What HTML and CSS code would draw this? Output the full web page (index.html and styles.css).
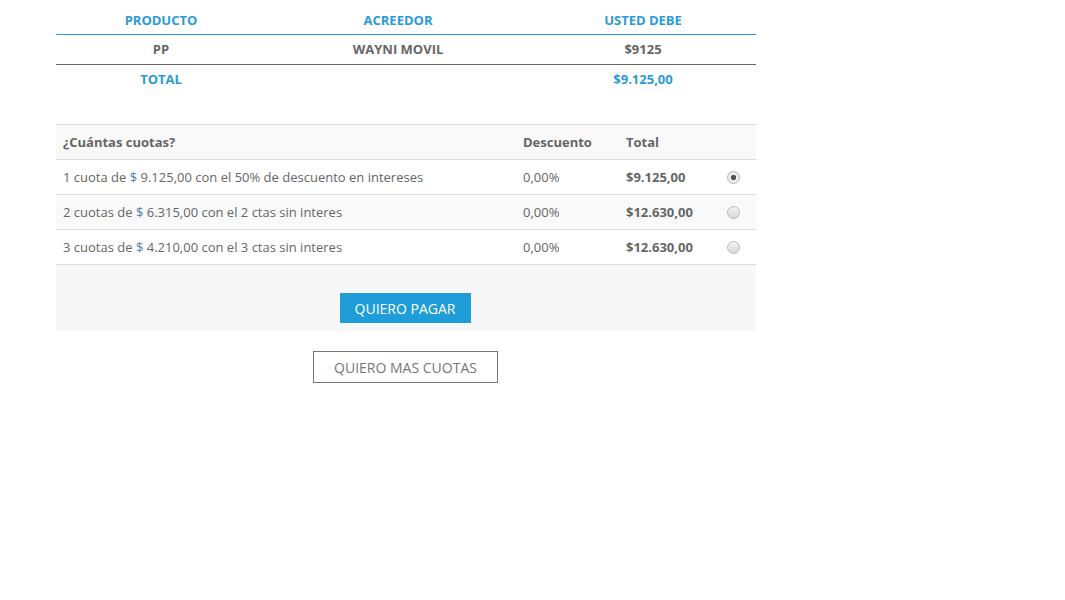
FILE: index.html
```html
<!DOCTYPE html>
<html lang="es">
<head>
<meta charset="utf-8">
<link rel="stylesheet" href="styles.css">
</head>
<body>
<div class="wrap">
  <table class="summary">
    <thead>
      <tr><th class="c1">PRODUCTO</th><th class="c2">ACREEDOR</th><th class="c3">USTED DEBE</th></tr>
    </thead>
    <tbody>
      <tr class="item"><td>PP</td><td>WAYNI MOVIL</td><td>$9125</td></tr>
      <tr class="total"><td>TOTAL</td><td></td><td>$9.125,00</td></tr>
    </tbody>
  </table>

  <div class="plans">
    <table class="cuotas">
      <thead>
        <tr><th class="q">¿Cuántas cuotas?</th><th class="d">Descuento</th><th class="t">Total</th><th class="r"></th></tr>
      </thead>
      <tbody>
        <tr class="odd"><td>1 cuota de <span class="cur">$</span> 9.125,00 con el 50% de descuento en intereses</td><td>0,00%</td><td class="amt">$9.125,00</td><td class="r"><span class="radio checked"></span></td></tr>
        <tr class="even"><td>2 cuotas de <span class="cur">$</span> 6.315,00 con el 2 ctas sin interes</td><td>0,00%</td><td class="amt">$12.630,00</td><td class="r"><span class="radio"></span></td></tr>
        <tr class="odd"><td>3 cuotas de <span class="cur">$</span> 4.210,00 con el 3 ctas sin interes</td><td>0,00%</td><td class="amt">$12.630,00</td><td class="r"><span class="radio"></span></td></tr>
      </tbody>
    </table>
    <div class="actions">
      <button class="btn-pay">QUIERO PAGAR</button>
    </div>
  </div>
  <div class="more">
    <button class="btn-more">QUIERO MAS CUOTAS</button>
  </div>
</div>
</body>
</html>
```

FILE: styles.css
```css
html, body {
  margin: 0;
  padding: 0;
  background: #fff;
}
body {
  font-family: "Open Sans", "Liberation Sans", sans-serif;
  font-size: 13px;
  color: #666;
}
.wrap {
  width: 700px;
  margin-left: 56px;
  padding-top: 5px;
}
table {
  border-collapse: collapse;
  width: 100%;
}
.summary th, .summary td {
  text-align: center;
  font-weight: 700;
  font-size: 13px;
  padding: 0;
}
.summary th {
  color: #2a9bd7;
  height: 29px;
  border-bottom: 1px solid #2a9bd7;
  vertical-align: middle;
}
.summary .c1 { width: 210px; }
.summary .c2 { width: 264px; }
.summary .c3 { width: 226px; }
.summary .item td {
  color: #666;
  height: 27px;
  padding-bottom: 2px;
  border-bottom: 1px solid #666;
}
.summary .total td {
  color: #2a9bd7;
  height: 28px;
  padding-bottom: 2px;
}
.plans {
  margin-top: 29px;
  background: #f7f7f7;
}
.cuotas th, .cuotas td {
  text-align: left;
  height: 34px;
  padding: 0 0 0 7px;
  border-top: 1px solid #ddd;
  vertical-align: middle;
}
.cuotas th {
  font-weight: 700;
  background: #f9f9f9;
}
.cuotas .q { width: 453px; }
.cuotas .d { width: 96px; }
.cuotas .t { width: 95px; }
.cuotas tbody tr:last-child td { border-bottom: 1px solid #ddd; }
.cuotas .odd td { background: #fff; }
.cuotas .even td { background: #f9f9f9; }
.cuotas .amt { font-weight: 700; }
.cuotas td.r { padding-left: 6px; }
.cur { color: #4a80b4; }
.radio {
  display: inline-block;
  width: 11px;
  height: 11px;
  border-radius: 50%;
  border: 1px solid #b8b8b8;
  background: linear-gradient(#f2f2f2, #d9d9d9);
  vertical-align: middle;
  position: relative;
  top: -1px;
}
.radio.checked {
  background: radial-gradient(circle, #555 0, #555 2.5px, #f0f0f0 3px, #e2e2e2 100%);
}
.actions {
  padding: 28px 0 8px;
  display: flex;
  justify-content: center;
}
.btn-pay {
  font-family: inherit;
  font-size: 14px;
  color: #fff;
  background: #1e9dd8;
  border: none;
  width: 131px;
  height: 30px;
  padding: 0;
  cursor: pointer;
  margin-left: -2px;
}
.more {
  display: flex;
  justify-content: center;
  padding-top: 20px;
}
.btn-more {
  font-family: inherit;
  font-size: 14px;
  color: #777;
  background: #fff;
  border: 1px solid #777;
  width: 185px;
  height: 32px;
  padding: 0;
  margin-left: -1px;
}
```
